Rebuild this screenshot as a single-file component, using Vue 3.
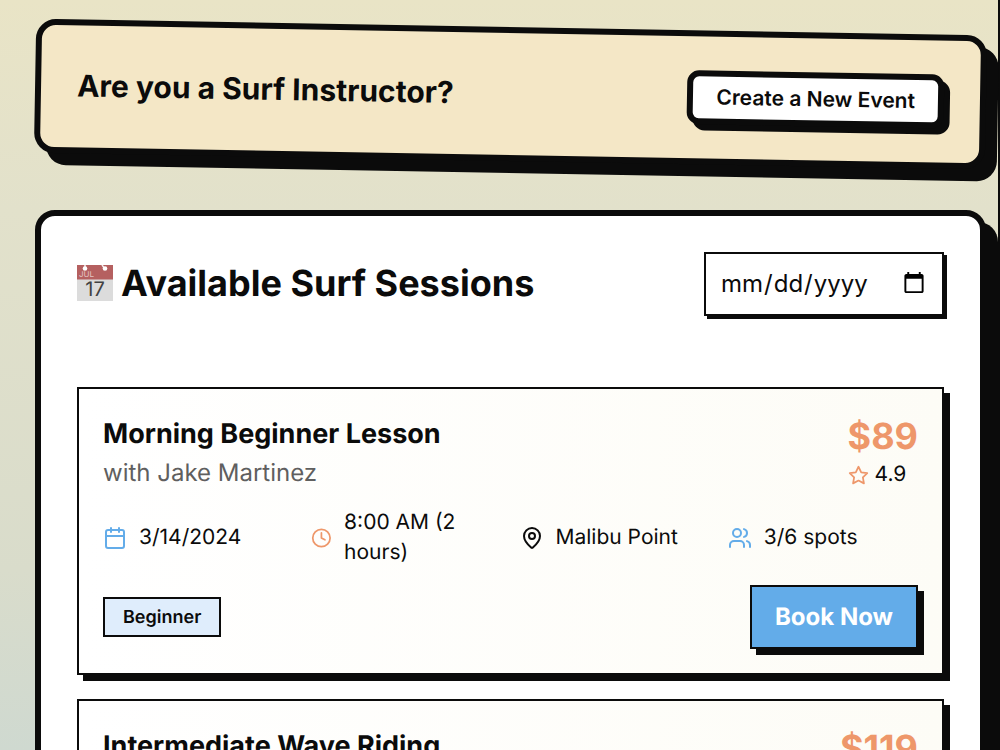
<script setup>
const sessions = [
  {
    id: 1,
    title: 'Morning Beginner Lesson',
    instructor: 'Jake Martinez',
    date: '3/14/2024',
    time: '8:00 AM (2 hours)',
    place: 'Malibu Point',
    spots: '3/6 spots',
    level: 'Beginner',
    price: 89,
    rating: '4.9',
  },
  {
    id: 2,
    title: 'Intermediate Wave Riding',
    price: 119,
  },
]
</script>

<template>
  <main class="page">
    <section class="banner">
      <h2 class="banner-title">Are you a Surf Instructor?</h2>
      <button type="button" class="create">Create a New Event</button>
    </section>

    <section class="panel">
      <header class="panel-head">
        <h1 class="panel-title">
          <svg class="emoji" viewBox="0 0 36 36" aria-hidden="true">
            <rect width="36" height="36" fill="#dcdcdc" />
            <rect width="36" height="14.500" fill="#b56060" />
            <path d="M8 0V4M25 0L28 4" stroke="#f4eeee" stroke-width="1.500" />
            <circle cx="8" cy="3.500" r="2.300" fill="#fff" />
            <circle cx="28" cy="3.500" r="2.300" fill="#fff" />
            <text x="2" y="12" class="emoji-month">JUL</text>
            <text x="18" y="31" text-anchor="middle" class="emoji-day">17</text>
          </svg>
          <span>Available Surf Sessions</span>
        </h1>
        <input type="date" class="date" aria-label="Session date" />
      </header>

      <div class="list">
        <article v-for="s in sessions" :key="s.id" class="session">
          <div class="top">
            <div>
              <h3 class="title">{{ s.title }}</h3>
              <p v-if="s.instructor" class="with">with {{ s.instructor }}</p>
            </div>
            <div>
              <div class="price">${{ s.price }}</div>
              <div v-if="s.rating" class="rating">
                <svg class="icon star" viewBox="0 0 24 24" aria-hidden="true">
                  <path d="M12 2l3.100 6.300 6.900 1-5 4.900 1.200 6.800-6.200-3.200L5.800 21 7 14.200 2 9.300l6.900-1z" />
                </svg>
                <span>{{ s.rating }}</span>
              </div>
            </div>
          </div>

          <div v-if="s.date" class="details">
            <div class="detail">
              <svg class="icon blue" viewBox="0 0 24 24" aria-hidden="true">
                <path d="M8 2v4M16 2v4M3 10h18" />
                <rect x="3" y="4" width="18" height="18" rx="2" />
              </svg>
              <span>{{ s.date }}</span>
            </div>
            <div class="detail">
              <svg class="icon coral" viewBox="0 0 24 24" aria-hidden="true">
                <circle cx="12" cy="12" r="10" />
                <path d="M12 6v6l4 2" />
              </svg>
              <span>{{ s.time }}</span>
            </div>
            <div class="detail">
              <svg class="icon" viewBox="0 0 24 24" aria-hidden="true">
                <path d="M20 10c0 4.993-5.539 10.193-7.399 11.799a1 1 0 0 1-1.202 0C9.539 20.193 4 14.993 4 10a8 8 0 0 1 16 0" />
                <circle cx="12" cy="10" r="3" />
              </svg>
              <span>{{ s.place }}</span>
            </div>
            <div class="detail">
              <svg class="icon blue" viewBox="0 0 24 24" aria-hidden="true">
                <path d="M16 21v-2a4 4 0 0 0-4-4H6a4 4 0 0 0-4 4v2M22 21v-2a4 4 0 0 0-3-3.870M16 3.130a4 4 0 0 1 0 7.750" />
                <circle cx="9" cy="7" r="4" />
              </svg>
              <span>{{ s.spots }}</span>
            </div>
          </div>

          <div v-if="s.level" class="bottom">
            <span class="level">{{ s.level }}</span>
            <button type="button" class="book">Book Now</button>
          </div>
        </article>
      </div>
    </section>
  </main>
</template>

<style>
html {
  scrollbar-width: none;
}
body {
  margin: 0;
}
</style>

<style scoped>
.page {
  box-sizing: border-box;
  min-height: 100vh;
  padding: 27px 12px 36px 35px;
  border-right: 2px solid #0b0b0b;
  background: linear-gradient(180deg, #e9e4c6 0%, #e2e1cb 28%, #d9dccb 76%, #cfd9d0 100%) fixed;
  color: #0b0b0b;
  font-family: Inter, "Liberation Sans", sans-serif;
  text-rendering: geometricPrecision;
}
h1,
h2,
h3,
p {
  margin: 0;
}
button {
  font-family: inherit;
  color: #0b0b0b;
  text-rendering: inherit;
}
.banner {
  display: flex;
  align-items: center;
  justify-content: space-between;
  box-sizing: border-box;
  min-height: 134px;
  padding: 30px 36px;
  border: 6px solid #0b0b0b;
  border-radius: 20px;
  background: #f4e7c6;
  box-shadow: 12px 12px 0 #0b0b0b;
  transform: rotate(1deg);
}
.banner-title {
  font-size: 30px;
  line-height: 36px;
  font-weight: 700;
}
.create {
  padding: 10px 23px 8px;
  border: 6px solid #0b0b0b;
  border-radius: 12px;
  background: #fff;
  box-shadow: 6px 6px 0 #0b0b0b;
  font-size: 21px;
  line-height: 24px;
  font-weight: 600;
}
.panel {
  margin-top: 49px;
  padding: 36px;
  border: 6px solid #0b0b0b;
  border-radius: 20px;
  background: #fff;
  box-shadow: 12px 12px 0 #0b0b0b;
}
.panel-head {
  display: flex;
  align-items: flex-start;
  justify-content: space-between;
  margin-bottom: 71px;
}
.panel-title {
  display: flex;
  align-items: center;
  gap: 8px;
  font-size: 36px;
  line-height: 62px;
  font-weight: 700;
}
.emoji {
  width: 36px;
  height: 36px;
}
.emoji-month {
  font: 8px Inter, sans-serif;
  fill: #e3c4c4;
}
.emoji-day {
  font: 400 20px Inter, sans-serif;
  fill: #424242;
}
.date {
  box-sizing: border-box;
  width: 240px;
  height: 64px;
  padding: 12px 14px 14px;
  border: 2px solid #0b0b0b;
  border-radius: 0;
  background: #fff;
  box-shadow: 3px 3px 0 #0b0b0b;
  color: #0b0b0b;
  font-family: inherit;
  font-size: 24px;
}
.list {
  display: flex;
  flex-direction: column;
  gap: 24px;
}
.session {
  padding: 24px;
  border: 2px solid #0b0b0b;
  background: linear-gradient(90deg, #fff, #fdfcf6);
  box-shadow: 6px 6px 0 #0b0b0b;
}
.top {
  display: flex;
  justify-content: space-between;
  margin-bottom: 17px;
}
.title {
  font-size: 27px;
  line-height: 42px;
  font-weight: 700;
}
.with {
  font-size: 24px;
  line-height: 36px;
  color: #5f5f5f;
}
.price {
  font-size: 36px;
  line-height: 46px;
  font-weight: 700;
  color: #ee976a;
}
.rating {
  display: flex;
  align-items: center;
  gap: 6px;
  font-size: 21px;
  line-height: 32px;
}
.details {
  display: grid;
  grid-template-columns: repeat(4, 1fr);
  gap: 18px;
  align-items: center;
  margin-bottom: 17px;
}
.detail {
  display: flex;
  align-items: center;
  gap: 12px;
  font-size: 21px;
  line-height: 30px;
}
.icon {
  flex: 0 1 24px;
  min-width: 0;
  height: 24px;
  fill: none;
  stroke: #0b0b0b;
  stroke-width: 2;
  stroke-linecap: round;
  stroke-linejoin: round;
}
.icon.coral {
  stroke: #ee976a;
}
.icon.blue {
  stroke: #63ace9;
}
.icon.star {
  flex: none;
  width: 21px;
  height: 21px;
  stroke: #ee976a;
}
.bottom {
  display: flex;
  align-items: center;
  justify-content: space-between;
}
.level {
  padding: 7px 18px 5px;
  border: 2px solid #0b0b0b;
  background: #dfedfc;
  font-size: 18px;
  line-height: 24px;
  font-weight: 600;
}
.book {
  padding: 16px 23px;
  border: 2px solid #0b0b0b;
  background: #63ace9;
  box-shadow: 6px 6px 0 #0b0b0b;
  color: #fff;
  font-size: 24px;
  line-height: 28px;
  font-weight: 700;
}
</style>
